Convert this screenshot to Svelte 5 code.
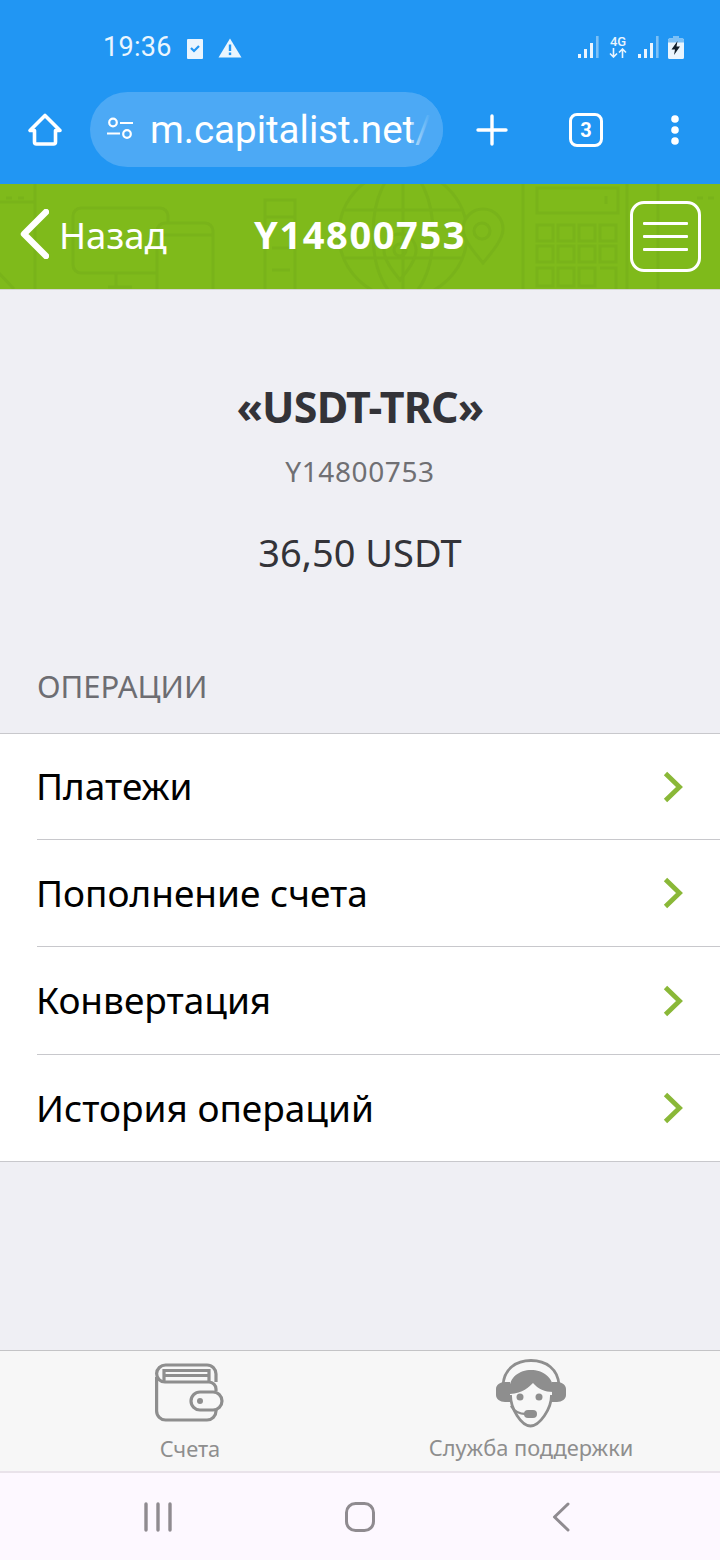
<script>
  const links = ['Платежи', 'Пополнение счета', 'Конвертация', 'История операций'];
</script>

<div class="page">
  <div class="chrome">
    <div class="status">
      <span class="time">19:36</span>
      <svg class="st-check" viewBox="0 0 18 22" width="18" height="22">
        <path d="M2 1h14a1 1 0 0 1 1 1v18a1 1 0 0 1-1 1H2a1 1 0 0 1-1-1V2a1 1 0 0 1 1-1z" fill="#eaf5fe"/>
        <path d="M5 10l3 3 5-5" fill="none" stroke="#2196f3" stroke-width="2.2"/>
      </svg>
      <svg class="st-warn" viewBox="0 0 24 20" width="24" height="20">
        <path d="M12 0.5L23.5 19.5H0.5z" fill="#eaf5fe"/>
        <rect x="10.8" y="6.5" width="2.4" height="6.5" fill="#2196f3"/>
        <rect x="10.8" y="14.5" width="2.4" height="2.6" fill="#2196f3"/>
      </svg>
      <span class="spacer"></span>
      <svg class="st-sig" viewBox="0 0 21 22" width="21" height="22">
        <rect x="0" y="18" width="3" height="4" fill="#eaf5fe"/>
        <rect x="6" y="13" width="3" height="9" fill="#eaf5fe"/>
        <rect x="12" y="7" width="3" height="15" fill="#eaf5fe"/>
        <rect x="18" y="0" width="2.6" height="22" fill="#7cc0f6"/>
      </svg>
      <div class="st-4g">
        <span>4G</span>
        <svg viewBox="0 0 18 10" width="18" height="10">
          <path d="M4.5 0v9M1 5.5l3.5 3.5 3.5-3.5M13.5 10V1M10 4.5L13.5 1 17 4.5" fill="none" stroke="#eaf5fe" stroke-width="1.6"/>
        </svg>
      </div>
      <svg class="st-sig2" viewBox="0 0 21 22" width="21" height="22">
        <rect x="0" y="18" width="3" height="4" fill="#eaf5fe"/>
        <rect x="6" y="13" width="3" height="9" fill="#eaf5fe"/>
        <rect x="12" y="7" width="3" height="15" fill="#eaf5fe"/>
        <rect x="18" y="0" width="2.6" height="22" fill="#7cc0f6"/>
      </svg>
      <svg class="st-bat" viewBox="0 0 16 23" width="16" height="23">
        <path d="M5 0h6v2.5h3.5a1.5 1.5 0 0 1 1.5 1.5v17.5a1.5 1.5 0 0 1-1.5 1.5h-13A1.5 1.5 0 0 1 0 21.500V4a1.500 1.500 0 0 1 1.500-1.500H5z" fill="#eaf5fe"/>
        <path d="M0 6.500V4a1.500 1.500 0 0 1 1.500-1.500H5V0h6v2.500h3.500A1.500 1.500 0 0 1 16 4v2.500z" fill="#7cc0f6"/>
        <path d="M9.500 5L3.500 13.500h3.500L6 19l6-8.500H8.500z" fill="#12202c"/>
      </svg>
    </div>
    <div class="toolbar">
      <svg class="home" viewBox="0 0 36 36" width="36" height="36">
        <path d="M18 3.500L3 18.500h4.500v11.500a2 2 0 0 0 2 2h17a2 2 0 0 0 2-2V18.500H33z" fill="none" stroke="#fff" stroke-width="3.600" stroke-linejoin="round"/>
      </svg>
      <div class="omnibox">
        <svg class="tune" viewBox="0 0 30 30" width="30" height="30">
          <circle cx="8" cy="7.500" r="3.800" fill="none" stroke="#fff" stroke-width="2.200"/>
          <path d="M15 8h13M2 18.500h13" stroke="#fff" stroke-width="2.200"/>
          <circle cx="22" cy="19" r="3.800" fill="none" stroke="#fff" stroke-width="2.200"/>
        </svg>
        <span class="url">m.capitalist.net/</span>
        <span class="fade"></span>
      </div>
      <svg class="plus" viewBox="0 0 32 32" width="32" height="32">
        <path d="M16 2v28M2 16h28" stroke="#fff" stroke-width="3.400" stroke-linecap="round"/>
      </svg>
      <div class="tabs">3</div>
      <svg class="more" viewBox="0 0 12 32" width="12" height="32">
        <circle cx="6" cy="5" r="3.800" fill="#fff"/>
        <circle cx="6" cy="16" r="3.800" fill="#fff"/>
        <circle cx="6" cy="27" r="3.800" fill="#fff"/>
      </svg>
    </div>
  </div>

  <header class="head">
    <svg class="pattern" viewBox="0 0 720 105" width="720" height="105" fill="none" stroke="#79b31a" stroke-width="3">
      <path d="M-2 18h37v-22M35 18v88M6 14h6M18 14h6"/>
      <path d="M-2 88l16 17"/>
      <path d="M157 89H81a8 8 0 0 1-8-8V32a8 8 0 0 1 8-8h79a8 8 0 0 1 8 8v7M116 89v14M108 103h24"/>
      <path d="M157 106V47a8 8 0 0 1 8-8h40a8 8 0 0 1 8 8v59M157 51h56"/>
      <path d="M265 16h30v17h-30zM265 16v90M295 16v90M272 64h18M272 86h18"/>
      <circle cx="403" cy="50" r="64"/>
      <ellipse cx="403" cy="50" rx="30" ry="64"/>
      <path d="M345 26h116M345 74h116M403 -14v128"/>
      <path d="M483 79c-10-12-20-24-20-34a20 20 0 0 1 40 0c0 10-10 22-20 34z" fill="#7fba1b"/>
      <circle cx="482" cy="47" r="8"/>
      <path d="M400 96c-8-10-16-20-16-30a16 16 0 0 1 32 0c0 10-8 20-16 30z"/>
      <circle cx="400" cy="66" r="6"/>
      <path d="M523 -4v110M627 -4v110M537 4h81v25h-81zM606 12v8"/>
      <path d="M537 41h16v16h-16zM558 41h16v16h-16zM579 41h16v16h-16zM600 41h16v16h-16zM537 62h16v16h-16zM558 62h16v16h-16zM579 62h16v16h-16zM600 62h16v16h-16zM537 84h16v18h-16zM558 84h16v18h-16zM579 84h16v18h-16zM600 84h16v22"/>
      <path d="M658 -4v110M697 14h6M708 14h6"/>
    </svg>
    <div class="back">
      <svg viewBox="0 0 30 50" width="30" height="50">
        <path d="M27 3L5 25l22 22" fill="none" stroke="#fff" stroke-width="6.400" stroke-linecap="round" stroke-linejoin="round"/>
      </svg>
      <span>Назад</span>
    </div>
    <div class="acct">Y14800753</div>
    <div class="burger">
      <i></i><i></i><i></i>
    </div>
  </header>

  <main class="body">
    <section class="summary">
      <h1>«USDT-TRC»</h1>
      <div class="num">Y14800753</div>
      <div class="bal">36,50 USDT</div>
    </section>
    <div class="label">ОПЕРАЦИИ</div>
    <ul class="list">
      {#each links as link}
        <li>
          <div class="row">
            <span>{link}</span>
            <svg viewBox="0 0 20 32" width="20" height="32">
              <path d="M2.500 2.500L16.500 16 2.500 29.500" fill="none" stroke="#8ab838" stroke-width="4.800"/>
            </svg>
          </div>
        </li>
      {/each}
    </ul>
  </main>

  <nav class="tabbar">
    <div class="tab t1">
      <svg viewBox="0 0 70 60" width="70" height="60" fill="none" stroke="#8e8e8e" stroke-width="3.200">
        <path d="M1.600 14V48a9 9 0 0 0 9 9H52a9 9 0 0 0 9-9V46"/>
        <path d="M61 28V26a7 7 0 0 0-7-7H10a8.400 8.400 0 0 1-8.400-8.400A9 9 0 0 1 10.600 2H52a9 9 0 0 1 9 9v8"/>
        <path d="M9 19V7.500h45V19M9 12.500h45"/>
        <rect x="36" y="29" width="31" height="18" rx="9" fill="#f7f7f7"/>
        <circle cx="45" cy="38" r="3" fill="#8e8e8e" stroke="none"/>
      </svg>
      <span>Счета</span>
    </div>
    <div class="tab t2">
      <svg viewBox="0 0 70 70" width="70" height="70">
        <path d="M7 26C8 10 20 1.500 35 1.500S62 10 63 26" fill="none" stroke="#8e8e8e" stroke-width="2.800"/>
        <path d="M14 35C11 20 22 11 35 11s24 9 22 22c-8 0-15-3-20-9-4 4-10 10-23 11z" fill="#8e8e8e"/>
        <path d="M14.500 36c0 14 11 31 20 31s21-17 21-31" fill="none" stroke="#8e8e8e" stroke-width="2.800"/>
        <path d="M9 23h5v20H9c-5 0-9-3-9-7v-6c0-4 4-7 9-7zM61 23h-5v20h5c5 0 9-3 9-7v-6c0-4-4-7-9-7z" fill="#8e8e8e"/>
        <circle cx="24" cy="38" r="3.500" fill="#8e8e8e"/>
        <circle cx="43" cy="38" r="3.500" fill="#8e8e8e"/>
        <path d="M15 47c3 5 8 8 15 8" fill="none" stroke="#8e8e8e" stroke-width="2.400"/>
        <rect x="28" y="51" width="13" height="8" rx="4" fill="#8e8e8e"/>
      </svg>
      <span>Служба поддержки</span>
    </div>
  </nav>

  <div class="sysnav">
    <svg viewBox="0 0 30 30" width="30" height="30">
      <path d="M3 2v26M15 2v26M27 2v26" stroke="#8f8b90" stroke-width="3.400" stroke-linecap="round"/>
    </svg>
    <svg viewBox="0 0 30 30" width="30" height="30">
      <rect x="1.500" y="1.500" width="27" height="27" rx="9" fill="none" stroke="#8f8b90" stroke-width="3"/>
    </svg>
    <svg class="sys-back" viewBox="0 0 18 30" width="18" height="30">
      <path d="M16 2L2.500 15 16 28" fill="none" stroke="#8f8b90" stroke-width="3" stroke-linecap="round" stroke-linejoin="round"/>
    </svg>
  </div>
</div>

<style>
  :global(body) {
    margin: 0;
    background: #efeff4;
  }

  .page {
    width: 720px;
    height: 1560px;
    display: flex;
    flex-direction: column;
    font-family: 'Noto Sans', sans-serif;
    overflow: hidden;
  }

  .chrome {
    height: 184px;
    background: #2196f3;
    flex: none;
    box-sizing: border-box;
    padding-top: 31px;
  }

  .status {
    display: flex;
    align-items: center;
    height: 32px;
    padding: 0 36px 0 103px;
    color: #eaf5fe;
  }

  .time {
    font: 400 27px Roboto, sans-serif;
    letter-spacing: 0.3px;
    width: 83px;
  }

  .st-warn { margin-left: 14px; }
  .st-check { margin-top: 3px; }
  .st-warn { margin-top: 2px; }
  .spacer { flex: 1; }
  .st-sig, .st-sig2 { margin-top: -1px; }
  .st-sig2 { margin-left: 10px; }
  .st-bat { margin-left: 9px; margin-top: 1px; }

  .st-4g {
    margin-left: 9px;
    width: 20px;
    display: flex;
    flex-direction: column;
    align-items: center;
    font: 500 13px/13px Roboto, sans-serif;
    margin-top: -1px;
  }

  .toolbar {
    display: flex;
    align-items: center;
    height: 75px;
    margin-top: 29px;
    padding-left: 27px;
  }

  .omnibox {
    position: relative;
    margin-left: 27px;
    width: 353px;
    height: 75px;
    flex: none;
    box-sizing: border-box;
    padding-left: 15px;
    border-radius: 38px;
    background: #4ca9f5;
    display: flex;
    align-items: center;
    overflow: hidden;
    color: #fff;
  }

  .url {
    margin-left: 15px;
    font: 400 38.5px Roboto, sans-serif;
    white-space: nowrap;
  }

  .fade {
    position: absolute;
    right: 0;
    top: 0;
    bottom: 0;
    width: 32px;
    background: linear-gradient(90deg, rgba(76, 169, 245, 0.3), #4ca9f5 60%);
  }

  .plus { margin-left: 33px; }

  .tabs {
    margin-left: 61px;
    width: 34px;
    height: 34px;
    box-sizing: border-box;
    border: 3px solid #fff;
    border-radius: 8px;
    display: flex;
    align-items: center;
    justify-content: center;
    color: #fff;
    font: 700 20px Roboto, sans-serif;
  }

  .more { margin-left: 66px; }

  .head {
    position: relative;
    height: 105px;
    flex: none;
    background: #7fba1b;
    border-bottom: 1px solid #d5d6d3;
    display: flex;
    align-items: center;
    color: #fff;
    overflow: hidden;
  }

  .pattern {
    position: absolute;
    left: 0;
    top: 0;
  }

  .back, .acct, .burger { position: relative; }

  .back {
    display: flex;
    align-items: center;
    padding-left: 19px;
    padding-bottom: 5px;
    width: 254px;
    box-sizing: border-box;
    font-size: 36.500px;
  }

  .back span { margin-left: 10px; line-height: 54px; padding-top: 1px; }

  .acct {
    font-size: 38px;
    font-weight: 700;
    letter-spacing: 1.600px;
    width: 376px;
    padding-bottom: 5px;
  }

  .burger {
    width: 71px;
    height: 71px;
    box-sizing: border-box;
    border: 3px solid #fff;
    border-radius: 14px;
    display: flex;
    flex-direction: column;
    align-items: center;
    justify-content: center;
    gap: 10px;
  }

  .burger i {
    display: block;
    width: 45px;
    height: 3px;
    background: #fff;
    border-radius: 1px;
  }

  .body {
    flex: 1;
    background: #efeff4;
  }

  .summary {
    text-align: center;
    padding-top: 88px;
    color: #333338;
  }

  h1 {
    margin: 0;
    font-size: 43px;
    line-height: 58px;
    font-weight: 700;
    letter-spacing: -0.800px;
  }

  .num {
    margin-top: 16px;
    color: #6f6f73;
    font-size: 28px;
    line-height: 38px;
    letter-spacing: 0.600px;
  }

  .bal {
    margin-top: 36px;
    font-size: 38px;
    line-height: 52px;
  }

  .label {
    margin-top: 86px;
    padding-left: 37px;
    font-size: 31px;
    line-height: 44px;
    color: #6d6d72;
  }

  .list {
    list-style: none;
    margin: 25px 0 0;
    padding: 0 0 0 37px;
    background: #fff;
    border-top: 1px solid #c8c8cc;
    border-bottom: 1px solid #c8c8cc;
  }

  li + li .row { border-top: 1px solid #c8c8cc; }

  .row {
    height: 107px;
    box-sizing: border-box;
    display: flex;
    align-items: center;
    justify-content: space-between;
    padding-right: 37px;
    color: #000;
    font-size: 37px;
  }

  .row span { padding-bottom: 2px; margin-left: -1px; }

  li:first-child .row { height: 105px; }
  li:nth-child(3) .row { height: 108px; }

  .tabbar {
    height: 121px;
    flex: none;
    box-sizing: border-box;
    background: #f7f7f7;
    border-top: 1px solid #c4c4c6;
    position: relative;
    display: flex;
  }

  .tab {
    display: flex;
    flex-direction: column;
    align-items: center;
    color: #8e8e8e;
    font-size: 21.800px;
    line-height: 30px;
  }

  .t1 {
    width: 380px;
    padding-top: 12px;
  }

  .t1 span { margin-top: 11px; }

  .t2 {
    width: 302px;
    padding-top: 8px;
  }

  .t2 span { margin-top: 4px; white-space: nowrap; }

  .sysnav {
    height: 89px;
    flex: none;
    box-sizing: border-box;
    background: #fdf8ff;
    border-top: 2px solid #e9e3ea;
    display: flex;
    align-items: center;
    gap: 172px;
    padding-left: 143px;
  }

  .sys-back { margin-left: 5px; }
</style>
